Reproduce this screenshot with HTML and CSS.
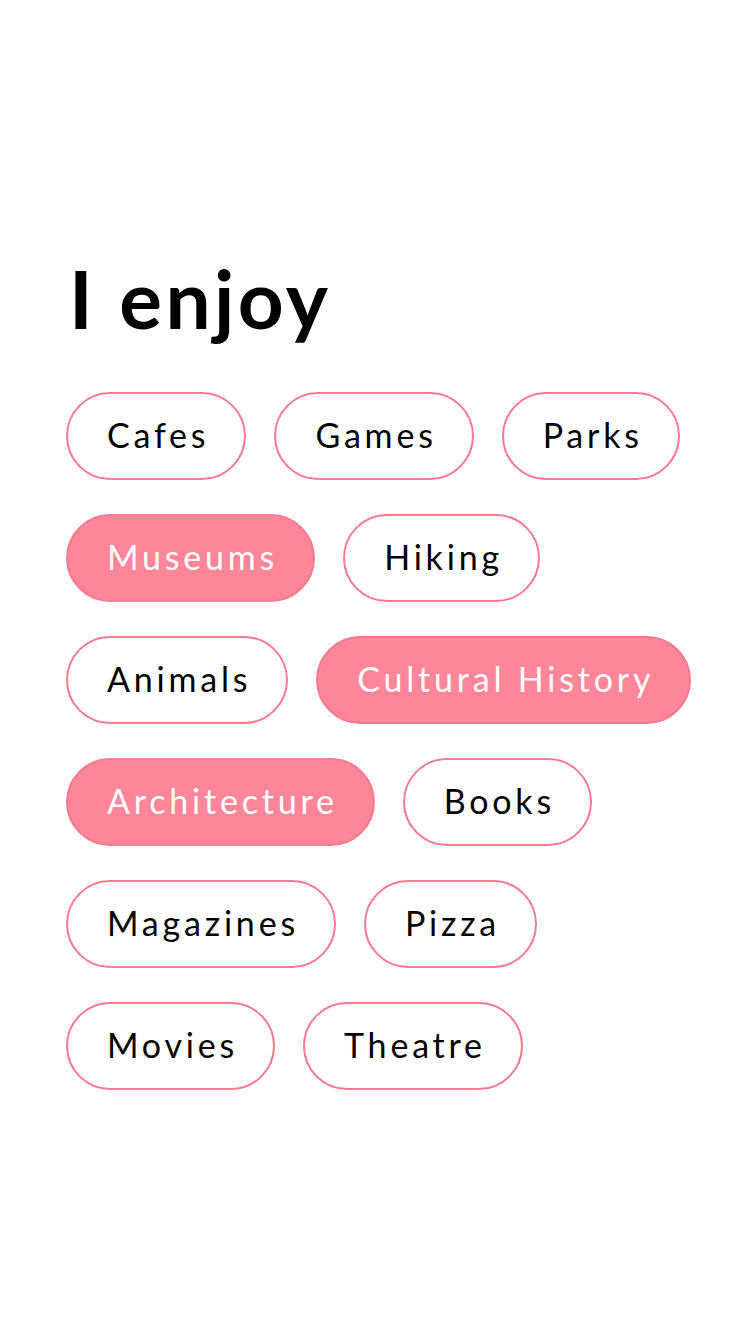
FILE: index.html
```html
<!DOCTYPE html>
<html>
<head>
<meta charset="utf-8">
<link rel="stylesheet" href="styles.css">
</head>
<body>
<main class="page">
  <h1 class="title">I enjoy</h1>
  <div class="chips">
    <div class="row">
      <span class="chip">Cafes</span>
      <span class="chip">Games</span>
      <span class="chip">Parks</span>
    </div>
    <div class="row">
      <span class="chip on">Museums</span>
      <span class="chip">Hiking</span>
    </div>
    <div class="row">
      <span class="chip">Animals</span>
      <span class="chip on">Cultural History</span>
    </div>
    <div class="row">
      <span class="chip on">Architecture</span>
      <span class="chip">Books</span>
    </div>
    <div class="row">
      <span class="chip">Magazines</span>
      <span class="chip">Pizza</span>
    </div>
    <div class="row">
      <span class="chip">Movies</span>
      <span class="chip">Theatre</span>
    </div>
  </div>
</main>
</body>
</html>
```
FILE: styles.css
```css
html, body {
  margin: 0;
  padding: 0;
  background: #fff;
}
body {
  font-family: "Lato", "Liberation Sans", sans-serif;
  color: #000;
}
.page {
  padding: 248px 0 0 66px;
}
.title {
  margin: 0 0 0 3px;
  font-size: 80px;
  font-weight: 700;
  line-height: 100px;
  letter-spacing: 3.5px;
}
.chips {
  margin-top: 44px;
  display: flex;
  flex-direction: column;
  gap: 34px;
}
.row {
  display: flex;
  gap: 28px;
}
.chip {
  box-sizing: border-box;
  height: 88px;
  padding: 0 35px 3px 39px;
  border: 2px solid #f7798f;
  border-radius: 44px;
  display: flex;
  align-items: center;
  font-size: 34px;
  letter-spacing: 3.8px;
  color: #000;
  background: #fff;
}
.chip.on {
  background: #ff8599;
  border-color: #f57a90;
  color: #fff;
}
```
